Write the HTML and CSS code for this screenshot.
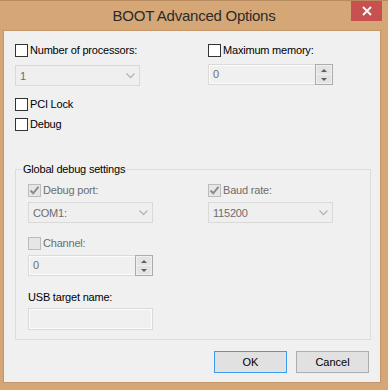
FILE: index.html
```html
<!DOCTYPE html>
<html lang="en">
<head>
    <meta charset="UTF-8">
    <title>BOOT Advanced Options</title>
    <link rel="stylesheet" href="styles.css">
</head>
<body>
    <div class="window">
        <div class="titlebar">
            <span class="title">BOOT Advanced Options</span>
            <button class="close-button" title="Close">
                <svg width="10" height="10" viewBox="0 0 10 10"><path d="M1 1 L9 9 M9 1 L1 9" stroke="#fff" stroke-width="1.8" fill="none"/></svg>
            </button>
        </div>
        <div class="client">
            <div class="cols">
                <div class="col">
                    <label class="check"><span class="box"></span>Number of processors:</label>
                    <div class="combo combo-procs">
                        <span>1</span>
                        <svg class="chevron" width="9" height="6" viewBox="0 0 9 6"><path d="M0.5 0.5 L4.5 4.5 L8.5 0.5" stroke="#b5b5b5" stroke-width="1.3" fill="none"/></svg>
                    </div>
                    <label class="check pci"><span class="box"></span>PCI Lock</label>
                    <label class="check debug"><span class="box"></span>Debug</label>
                </div>
                <div class="col">
                    <label class="check"><span class="box"></span>Maximum memory:</label>
                    <div class="spin spin-memory">
                        <span class="spin-value">0</span>
                        <div class="spin-buttons">
                            <span class="spin-btn"><i class="tri up"></i></span>
                            <span class="spin-btn"><i class="tri down"></i></span>
                        </div>
                    </div>
                </div>
            </div>

            <fieldset class="group">
                <legend>Global debug settings</legend>
                <div class="cols inner">
                    <div class="col">
                        <label class="check disabled">
                            <span class="box">
                                <svg width="11" height="11" viewBox="0 0 11 11"><path d="M1.5 5.5 L4.2 8.3 L9.5 1.8" stroke="#8c8c8c" stroke-width="2" fill="none"/></svg>
                            </span>Debug port:
                        </label>
                        <div class="combo">
                            <span>COM1:</span>
                            <svg class="chevron" width="9" height="6" viewBox="0 0 9 6"><path d="M0.5 0.5 L4.5 4.5 L8.5 0.5" stroke="#b5b5b5" stroke-width="1.3" fill="none"/></svg>
                        </div>
                        <label class="check disabled channel"><span class="box"></span>Channel:</label>
                        <div class="spin">
                            <span class="spin-value">0</span>
                            <div class="spin-buttons">
                                <span class="spin-btn"><i class="tri up"></i></span>
                                <span class="spin-btn"><i class="tri down"></i></span>
                            </div>
                        </div>
                        <div class="field-label">USB target name:</div>
                        <div class="textbox"></div>
                    </div>
                    <div class="col">
                        <label class="check disabled">
                            <span class="box">
                                <svg width="11" height="11" viewBox="0 0 11 11"><path d="M1.5 5.5 L4.2 8.3 L9.5 1.8" stroke="#8c8c8c" stroke-width="2" fill="none"/></svg>
                            </span>Baud rate:
                        </label>
                        <div class="combo">
                            <span>115200</span>
                            <svg class="chevron" width="9" height="6" viewBox="0 0 9 6"><path d="M0.5 0.5 L4.5 4.5 L8.5 0.5" stroke="#b5b5b5" stroke-width="1.3" fill="none"/></svg>
                        </div>
                    </div>
                </div>
            </fieldset>

            <div class="buttons">
                <button class="btn default">OK</button>
                <button class="btn">Cancel</button>
            </div>
        </div>
    </div>
</body>
</html>
```

FILE: styles.css
```css
body {
    margin: 0;
    font-family: "Liberation Sans", Arial, sans-serif;
    font-size: 11px;
    letter-spacing: -0.2px;
    color: #000;
}
.window {
    width: 388px;
    height: 390px;
    box-sizing: border-box;
    background: #d5a676;
    border-top: 1px solid #b98c5f;
    display: flex;
    flex-direction: column;
    position: relative;
}
.titlebar {
    height: 29px;
    text-align: center;
    line-height: 30px;
}
.title {
    font-size: 15px;
    letter-spacing: -0.25px;
    color: #2b2b2b;
}
.close-button {
    position: absolute;
    top: 0;
    right: 6px;
    width: 31px;
    height: 20px;
    border: none;
    padding: 0;
    background: #c75050;
    display: flex;
    align-items: center;
    justify-content: center;
}
.client {
    margin: 0 7px 7px 3px;
    flex: 1;
    background: #f0f0f0;
    border: 1px solid #c3966a;
    padding: 12px 9px 0 11px;
}
.cols {
    display: grid;
    grid-template-columns: 193px 1fr;
}
.col {
    display: flex;
    flex-direction: column;
    align-items: flex-start;
}
.check {
    display: flex;
    align-items: center;
    height: 15px;
    gap: 2px;
    line-height: 15px;
}
.box {
    width: 11px;
    height: 11px;
    border: 1px solid #333;
    background: #fff;
    display: flex;
    align-items: center;
    justify-content: center;
}
.check.disabled {
    color: #6d6d6d;
}
.check.disabled .box {
    border-color: #bcbcbc;
    background: #e6e6e6;
}
.pci {
    margin-top: 11px;
}
.debug {
    margin-top: 5px;
}
.combo {
    margin-top: 4px;
    width: 125px;
    height: 21px;
    box-sizing: border-box;
    border: 1px solid #d9d9d9;
    background: #efefef;
    color: #6d6d6d;
    display: flex;
    align-items: center;
    justify-content: space-between;
    padding: 0 4px 0 4px;
}
.combo-procs {
    margin-top: 7px;
}
.spin {
    margin-top: 4px;
    width: 125px;
    height: 21px;
    box-sizing: border-box;
    border: 1px solid #dadada;
    box-shadow: inset 0 0 0 1px #fbfbfb;
    color: #6d6d6d;
    display: flex;
    justify-content: space-between;
}
.spin-memory {
    margin-top: 6px;
}
.spin-value {
    padding: 2px 0 0 4px;
    line-height: 15px;
}
.spin-buttons {
    width: 18px;
    margin: -1px -1px -1px 0;
    border: 1px solid #acacac;
    box-sizing: border-box;
    display: flex;
    flex-direction: column;
    gap: 1px;
    padding: 1px;
    background: #f0f0f0;
}
.spin-btn {
    flex: 1;
    background: #e3e3e3;
    display: flex;
    align-items: center;
    justify-content: center;
}
.tri {
    width: 0;
    height: 0;
    border-left: 3px solid transparent;
    border-right: 3px solid transparent;
}
.tri.up {
    border-bottom: 3px solid #606060;
}
.tri.down {
    border-top: 3px solid #606060;
}
.group {
    margin: 30px 0 0 0;
    border: 1px solid #dcdcdc;
    padding: 6px 0 9px 12px;
    min-width: 0;
}
.group legend {
    padding: 0 1px;
    margin-left: -6px;
    line-height: 15px;
}
.inner {
    grid-template-columns: 180px 1fr;
}
.channel {
    margin-top: 13px;
}
.field-label {
    margin-top: 14px;
    line-height: 15px;
}
.textbox {
    margin-top: 3px;
    width: 125px;
    height: 22px;
    box-sizing: border-box;
    border: 1px solid #d9d9d9;
    box-shadow: inset 0 0 0 1px #fbfbfb;
}
.buttons {
    display: flex;
    justify-content: flex-end;
    gap: 9px;
    margin-top: 11px;
    padding-right: 2px;
}
.btn {
    width: 73px;
    height: 22px;
    border: 1px solid #adadad;
    background: #e1e1e1;
    font-family: "Liberation Sans", Arial, sans-serif;
    font-size: 11px;
    color: #000;
    padding: 0;
}
.btn.default {
    border-color: #3c9bf0;
}
```
